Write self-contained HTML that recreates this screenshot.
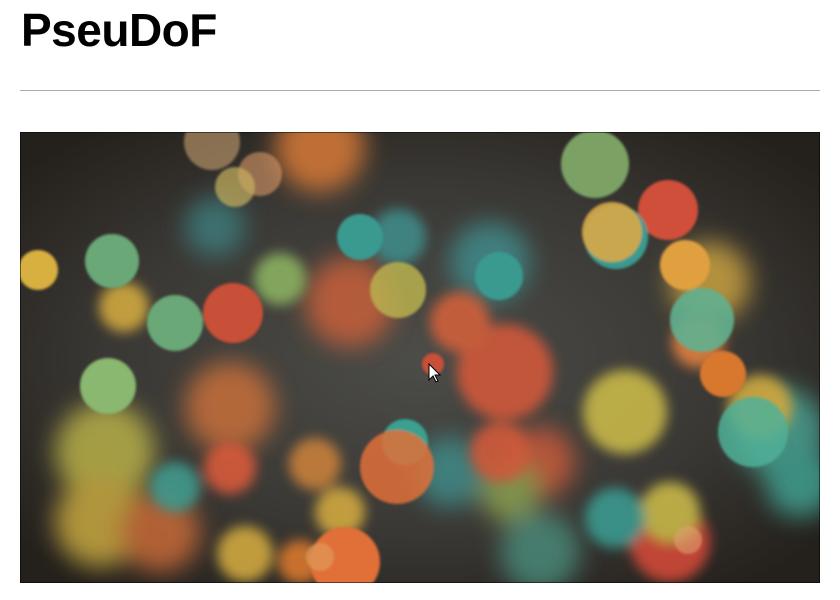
<!DOCTYPE html>
<html><head><style>
body{margin:0;background:#fff;width:840px;height:600px;overflow:hidden;font-family:"Liberation Sans",sans-serif}
h1{position:absolute;left:21px;top:3px;margin:0;font-size:46px;font-weight:bold;letter-spacing:-0.5px;color:#000}
.hr{position:absolute;left:20px;top:90px;width:800px;height:1px;background:#aaa}
svg{position:absolute;left:20px;top:132px}
</style></head><body>
<h1>PseuDoF</h1>
<div class="hr"></div>
<svg width="800" height="451" viewBox="0 0 800 451">
<defs>
<radialGradient id="bg" cx="0.5" cy="0.5" r="0.65">
<stop offset="0" stop-color="#4c4c48"/><stop offset="0.6" stop-color="#3a3834"/><stop offset="1" stop-color="#24201c"/>
</radialGradient>
<filter id="b1"><feGaussianBlur stdDeviation="1.2"/></filter>
<filter id="b2"><feGaussianBlur stdDeviation="6"/></filter>
<filter id="b3"><feGaussianBlur stdDeviation="12"/></filter>
</defs>
<rect width="800" height="451" fill="url(#bg)"/>
<g filter="url(#b3)" opacity="0.85">
<circle cx="330" cy="170" r="45" fill="#c8603a"/>
<circle cx="210" cy="275" r="45" fill="#c8703a"/>
<circle cx="85" cy="320" r="50" fill="#b8b04a"/>
<circle cx="80" cy="390" r="45" fill="#c8a840"/>
<circle cx="140" cy="400" r="40" fill="#c86a38"/>
<circle cx="470" cy="130" r="40" fill="#3f8a8a"/>
<circle cx="300" cy="15" r="45" fill="#d87a38"/>
<circle cx="195" cy="95" r="30" fill="#3c7a7a"/>
<circle cx="520" cy="330" r="35" fill="#c85a3a"/>
<circle cx="430" cy="340" r="35" fill="#3f8a88"/>
<circle cx="490" cy="360" r="30" fill="#8aa050"/>
<circle cx="690" cy="150" r="40" fill="#c8a040"/>
<circle cx="760" cy="300" r="45" fill="#4aa090"/>
<circle cx="780" cy="350" r="35" fill="#40a090"/>
<circle cx="520" cy="420" r="40" fill="#4a8878"/>
</g>
<g filter="url(#b2)" opacity="0.9">
<circle cx="485" cy="240" r="48" fill="#d0583a"/>
<circle cx="605" cy="280" r="42" fill="#c8b848"/>
<circle cx="210" cy="336" r="26" fill="#d85a3a"/>
<circle cx="295" cy="332" r="26" fill="#c8803a"/>
<circle cx="155" cy="355" r="25" fill="#3f9a8e"/>
<circle cx="320" cy="380" r="25" fill="#d0a840"/>
<circle cx="225" cy="422" r="28" fill="#d0a840"/>
<circle cx="280" cy="430" r="22" fill="#d8782f"/>
<circle cx="104" cy="175" r="25" fill="#d0a840"/>
<circle cx="260" cy="147" r="26" fill="#8ab060"/>
<circle cx="378" cy="105" r="28" fill="#3f8a88"/>
<circle cx="440" cy="190" r="30" fill="#d0603a"/>
<circle cx="678" cy="210" r="26" fill="#e08040"/>
<circle cx="740" cy="275" r="32" fill="#d0a840"/>
<circle cx="650" cy="410" r="40" fill="#d04838"/>
<circle cx="650" cy="380" r="30" fill="#c8b848"/>
<circle cx="595" cy="386" r="30" fill="#3a9a90"/>
<circle cx="480" cy="320" r="30" fill="#d05a3a"/>
</g>
<g filter="url(#b1)">
<circle cx="575" cy="32" r="34" fill="#80a868" opacity="0.95"/>
<circle cx="648" cy="78" r="30" fill="#d0503a"/>
<circle cx="596" cy="105" r="32" fill="#3a9a90"/>
<circle cx="592" cy="100" r="30" fill="#d8a848" opacity="0.9"/>
<circle cx="665" cy="133" r="25" fill="#e0a040"/>
<circle cx="682" cy="188" r="32" fill="#60b090" opacity="0.9"/>
<circle cx="703" cy="242" r="23" fill="#d8782f"/>
<circle cx="18" cy="138" r="20" fill="#d8b040"/>
<circle cx="92" cy="129" r="27" fill="#6aa878"/>
<circle cx="155" cy="191" r="28" fill="#6aa878"/>
<circle cx="213" cy="181" r="30" fill="#c85038"/>
<circle cx="88" cy="254" r="28" fill="#8ab870"/>
<circle cx="340" cy="105" r="23" fill="#3a9a90"/>
<circle cx="378" cy="158" r="28" fill="#b8b050" opacity="0.85"/>
<circle cx="479" cy="144" r="24" fill="#3a9a90"/>
<circle cx="413" cy="232" r="11" fill="#c85038"/>
<circle cx="385" cy="310" r="23" fill="#3aa090"/>
<circle cx="377" cy="335" r="37" fill="#e07038" opacity="0.85"/>
<circle cx="733" cy="300" r="35" fill="#50b098" opacity="0.85"/>
<circle cx="240" cy="42" r="22" fill="#d89a68" opacity="0.6"/>
<circle cx="215" cy="55" r="20" fill="#c8b060" opacity="0.7"/>
<circle cx="192" cy="10" r="28" fill="#c8a070" opacity="0.6"/>
<circle cx="325" cy="430" r="35" fill="#e07038"/>
<circle cx="300" cy="425" r="14" fill="#e0a060" opacity="0.6"/>
<circle cx="668" cy="408" r="14" fill="#e0a070" opacity="0.6"/>
</g>
<path d="M409 232 L409 248 L413 244 L416 250 L418 249 L415 243 L420 243 Z" fill="#fff" stroke="#000" stroke-width="1"/>
<rect x="0.5" y="0.5" width="799" height="450" fill="none" stroke="#000" stroke-dasharray="1,1"/>
</svg>
</body></html>
